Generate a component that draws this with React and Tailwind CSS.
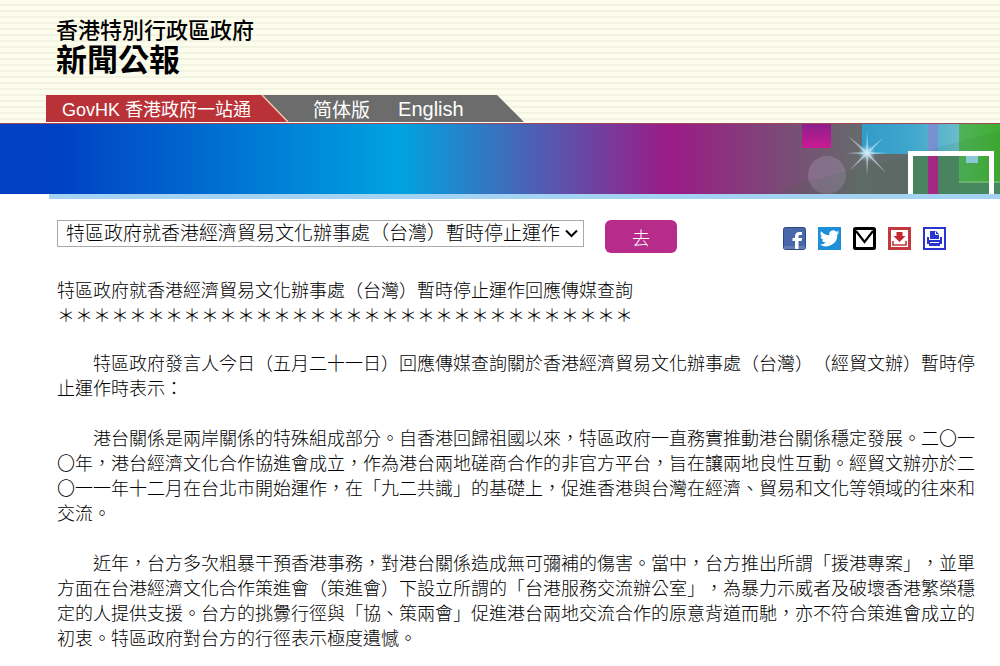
const FONT = "font-['Liberation_Sans','Noto_Sans_CJK_TC',sans-serif]";

const TITLE = "特區政府就香港經濟貿易文化辦事處（台灣）暫時停止運作回應傳媒查詢";

const PARAGRAPHS = [
  "特區政府發言人今日（五月二十一日）回應傳媒查詢關於香港經濟貿易文化辦事處（台灣）（經貿文辦）暫時停止運作時表示：",
  "港台關係是兩岸關係的特殊組成部分。自香港回歸祖國以來，特區政府一直務實推動港台關係穩定發展。二〇一〇年，港台經濟文化合作協進會成立，作為港台兩地磋商合作的非官方平台，旨在讓兩地良性互動。經貿文辦亦於二〇一一年十二月在台北市開始運作，在「九二共識」的基礎上，促進香港與台灣在經濟、貿易和文化等領域的往來和交流。",
  "近年，台方多次粗暴干預香港事務，對港台關係造成無可彌補的傷害。當中，台方推出所謂「援港專案」，並單方面在台港經濟文化合作策進會（策進會）下設立所謂的「台港服務交流辦公室」，為暴力示威者及破壞香港繁榮穩定的人提供支援。台方的挑釁行徑與「協、策兩會」促進港台兩地交流合作的原意背道而馳，亦不符合策進會成立的初衷。特區政府對台方的行徑表示極度遺憾。",
];

function Header() {
  return (
    <header className="bg-[repeating-linear-gradient(to_bottom,#fdfdee_0px,#fdfdee_4px,#f3f3e2_4px,#f3f3e2_6px)] pb-px">
      <div className="pt-[17px] pl-14 text-black">
        <p className="text-[22px] leading-7 font-medium">香港特別行政區政府</p>
        <h1 className="text-[31px] leading-8 font-bold">新聞公報</h1>
      </div>
      <nav className="mt-[18px] ml-[46px] flex h-[27px] text-lg leading-[30px] text-white">
        <a href="#govhk" className="bg-[#b93237] pr-0.5 pl-4">
          GovHK 香港政府一站通
        </a>
        <svg width="36" height="27" viewBox="0 0 36 27" className="shrink-0">
          <path d="M0 0H36V27H0Z" fill="#6c6c6c" />
          <path d="M0 0H9L35 27H0Z" fill="#b93237" />
          <path d="M9 0L35 27" stroke="#f3c9ae" strokeWidth="1.4" />
        </svg>
        <div className="flex gap-7 bg-[#6c6c6c] pl-6">
          <a href="#sc" lang="zh-Hans" className="font-['Noto_Sans_CJK_SC',sans-serif] text-[19px] leading-[28px]">
            简体版
          </a>
          <a href="#en" className="text-xl leading-[28px]">English</a>
        </div>
        <svg width="60" height="27" viewBox="0 0 60 27" className="shrink-0">
          <path d="M0 0H33L60 27H0Z" fill="#6c6c6c" />
        </svg>
      </nav>
    </header>
  );
}

function BannerArt() {
  return (
    <svg width="220" height="70" viewBox="0 0 220 70" className="shrink-0" aria-hidden="true">
      <defs>
        <linearGradient id="pink" x1="0" y1="0" x2="0" y2="1">
          <stop offset="0" stopColor="#8b1f8c" />
          <stop offset="1" stopColor="#cc1a92" />
        </linearGradient>
        <linearGradient id="sky" x1="0" y1="0" x2="1" y2="0">
          <stop offset="0" stopColor="#319bc9" />
          <stop offset="0.5" stopColor="#3fa6cc" />
          <stop offset="1" stopColor="#6bbccb" />
        </linearGradient>
        <linearGradient id="green" x1="0" y1="0" x2="1" y2="0">
          <stop offset="0" stopColor="#50b25a" />
          <stop offset="1" stopColor="#40ae30" />
        </linearGradient>
        <radialGradient id="glow">
          <stop offset="0" stopColor="#d9f3ff" />
          <stop offset="1" stopColor="#8fd0e8" stopOpacity="0" />
        </radialGradient>
      </defs>
      <rect x="22" y="0" width="29" height="24" fill="url(#pink)" />
      <circle cx="47" cy="51" r="19" fill="#a58fae" opacity="0.4" />
      <rect x="82" y="0" width="97" height="30" fill="url(#sky)" />
      <rect x="132" y="30" width="47" height="40" fill="#508666" />
      <rect x="179" y="0" width="41" height="58" fill="url(#green)" />
      <rect x="179" y="58" width="41" height="12" fill="#4a8c66" />
      <rect x="179" y="57" width="41" height="2" fill="#74bd72" />
      <rect x="148" y="0" width="10" height="28" fill="#7690d2" />
      <rect x="148" y="28" width="10" height="42" fill="#b4228f" />
      <path d="M0 65L220 7V70H0Z" fill="#1b6a35" opacity="0.1" />
      <rect x="186" y="32" width="12" height="7" fill="#8ac9d9" />
      <path d="M130.500 70V29.500H211.500V70" fill="none" stroke="#fff" strokeWidth="5" />
      <circle cx="87" cy="29" r="9" fill="url(#glow)" />
      <g fill="#d5eef7" opacity="0.6">
        <path d="M87 6L88.500 29L87 52L86 29Z" />
        <path d="M67 29L87 28L108 29L87 30.500Z" />
        <path d="M68 12L88 28L106 49L86 30Z" />
        <path d="M104 13L88 30L70 46L86 28Z" />
      </g>
    </svg>
  );
}

function Banner() {
  return (
    <div>
      <div className="flex h-[71px] justify-end border-t border-[#a04858] bg-[linear-gradient(90deg,#0041c4_0%,#0041c4_6%,#00a3e0_40%,#9b1b86_67%,#666a6c_86%,#5a6b68_100%)]">
        <BannerArt />
      </div>
      <div className="ml-[49px] h-[5px] bg-[#a3d2f3]" />
    </div>
  );
}

function ShareLinks() {
  return (
    <div className="flex gap-3">
      <a href="#facebook" aria-label="Facebook">
        <svg width="23" height="23" viewBox="0 0 23 23">
          <rect x="0.500" y="0.500" width="22" height="22" rx="2" fill="#4767a8" stroke="#2d4780" />
          <path d="M1 19H22V22H1Z" fill="#5f7cb5" />
          <path d="M12 22V14H9.500V11H12V9.500C12 6.500 13.500 5 16 5H19V8H17C15.800 8 15.500 8.500 15.500 9.500V11H19L18.500 14H15.500V22Z" fill="#fff" />
        </svg>
      </a>
      <a href="#twitter" aria-label="Twitter">
        <svg width="23" height="23" viewBox="0 0 23 23">
          <rect width="23" height="23" fill="#1c8fd6" />
          <path transform="translate(1 1) scale(0.88)" d="M23 4.900a9 9 0 0 1-2.600.7 4.500 4.500 0 0 0 2-2.500 9 9 0 0 1-2.900 1.100 4.500 4.500 0 0 0-7.700 4.100A12.900 12.900 0 0 1 2.500 3.600a4.500 4.500 0 0 0 1.400 6.100 4.500 4.500 0 0 1-2.100-.6c0 2.200 1.600 4.100 3.700 4.600a4.600 4.600 0 0 1-2.100.1 4.500 4.500 0 0 0 4.300 3.100A9.100 9.100 0 0 1 1 18.800a12.900 12.900 0 0 0 19.800-11.500A9 9 0 0 0 23 4.900Z" fill="#fff" />
        </svg>
      </a>
      <a href="#email" aria-label="Email">
        <svg width="23" height="23" viewBox="0 0 23 23">
          <rect x="1.500" y="1.500" width="20" height="20" rx="1" fill="#fff" stroke="#000" strokeWidth="3" />
          <path d="M3 4L11.500 15L20 4" fill="none" stroke="#000" strokeWidth="2.200" />
        </svg>
      </a>
      <a href="#download" aria-label="Download">
        <svg width="23" height="23" viewBox="0 0 23 23">
          <rect x="1.500" y="1.500" width="20" height="20" fill="#fff" stroke="#c2383c" strokeWidth="3" />
          <path d="M8.500 5H14.500V9H17.500L11.500 15L5.500 9H8.500Z" fill="#c2282c" />
          <path d="M5 14V18H18V14" fill="none" stroke="#c2383c" strokeWidth="1.600" />
        </svg>
      </a>
      <a href="#print" aria-label="Print">
        <svg width="23" height="23" viewBox="0 0 23 23">
          <rect x="1" y="1" width="21" height="21" fill="#fff" stroke="#2a35d0" strokeWidth="2" />
          <path d="M7 4H13L16 7V12H7Z" fill="#2a35d0" />
          <path d="M4 10H6V13H17V10H19V17H17V19H6V17H4Z" fill="#2a35d0" />
          <path d="M7 15.500H16" stroke="#fff" />
          <path d="M12.500 4.500V7.500H15.500" fill="none" stroke="#fff" />
        </svg>
      </a>
    </div>
  );
}

function Toolbar() {
  return (
    <div className="flex items-start">
      <div className="grid min-w-0 max-w-[527px] flex-1">
        <select
          aria-label="新聞公報"
          className="col-start-1 row-start-1 h-[27px] w-full appearance-none border border-[#a9a9a9] bg-white pr-[22px] pl-2 text-[19px] leading-[25px] font-light text-black"
        >
          <option>{TITLE}</option>
        </select>
        <svg
          width="13"
          height="9"
          viewBox="0 0 13 9"
          className="pointer-events-none col-start-1 row-start-1 mr-[6px] self-center justify-self-end"
        >
          <path d="M1 1.500L6.500 7L12 1.500" fill="none" stroke="#000" strokeWidth="2" />
        </svg>
      </div>
      <button type="button" className="ml-[21px] h-[33px] w-[72px] rounded-md bg-[#b72b8b] pt-[6px] text-lg leading-[25px] font-light text-white">
        去
      </button>
      <div className="mt-[7px] mr-[34px] ml-auto">
        <ShareLinks />
      </div>
    </div>
  );
}

export default function App() {
  return (
    <div className={`min-h-dvh bg-white text-black ${FONT}`} lang="zh-Hant">
      <Header />
      <Banner />
      <main className="pt-[21px] pr-5 pl-[57px]">
        <Toolbar />
        <article className="mt-[26px] text-lg leading-[25px] font-light [text-spacing-trim:space-all]">
          <h2>{TITLE}</h2>
          <div aria-hidden="true">{"＊".repeat(32)}</div>
          <div className="mt-[23px] space-y-[25px]">
            {PARAGRAPHS.map((text) => (
              <p key={text} className="indent-9">{text}</p>
            ))}
          </div>
        </article>
      </main>
    </div>
  );
}
